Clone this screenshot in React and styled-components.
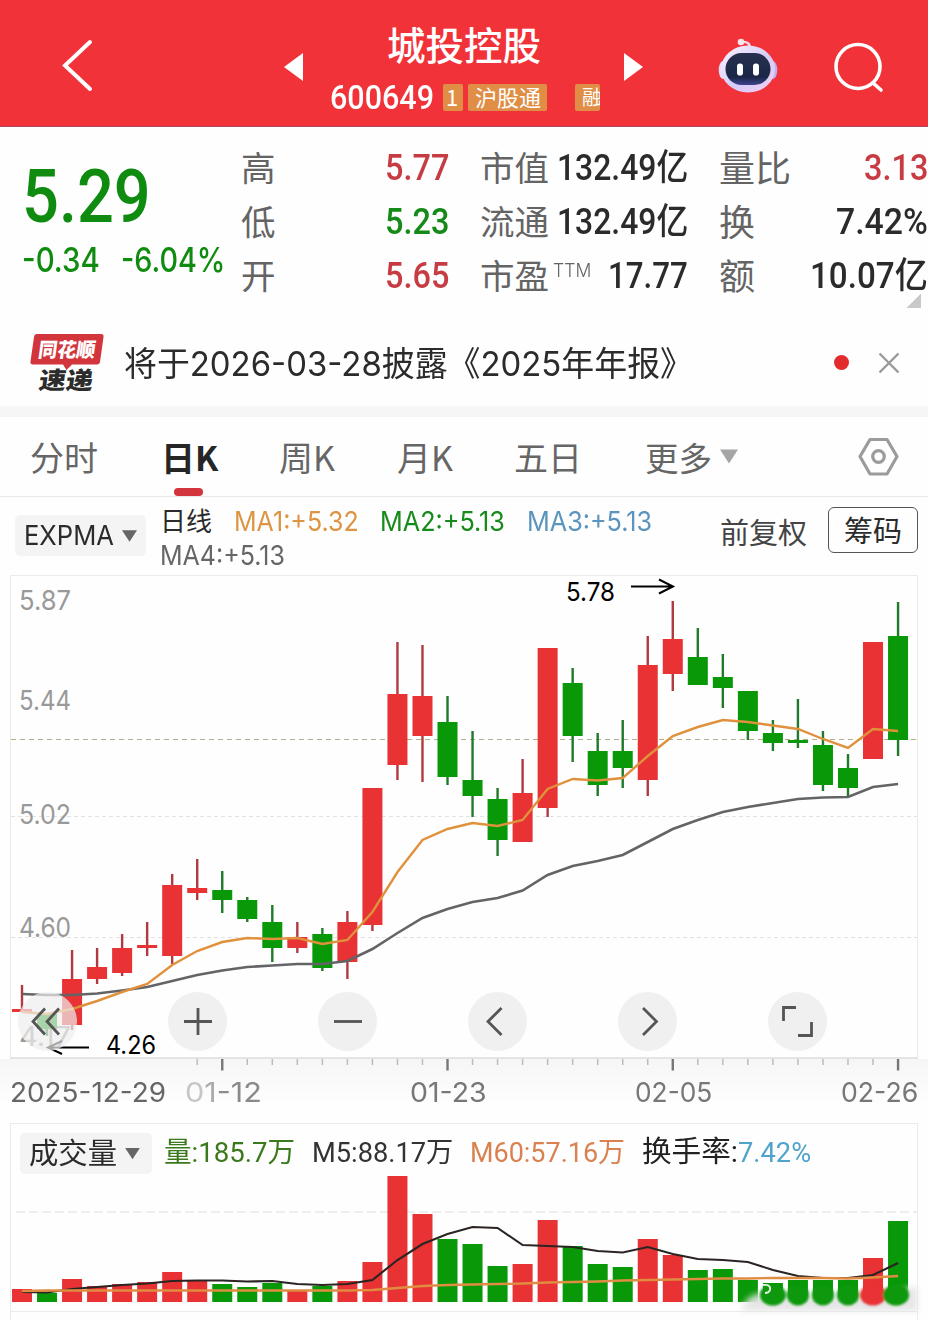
import React, { useLayoutEffect, useRef, useState } from 'react'
import styled, { createGlobalStyle, css } from 'styled-components'

const RED = '#e83234'
const GREEN = '#089808'
const cjk = "'Noto Sans CJK SC', sans-serif"

const GlobalStyle = createGlobalStyle`
    * {
        box-sizing: border-box;
    }
    body {
        margin: 0;
        background: #fefefe;
        font-family: Inter, ${cjk};
        color: #2b2b2b;
    }
    svg {
        display: block;
        flex: none;
        overflow: visible;
    }
`

const FitBox = styled.span`
    display: block;
    flex: none;
    height: 1.3em;
    line-height: 1.3em;
    white-space: nowrap;
    font-size: ${(p) => p.$size}px;
    font-weight: ${(p) => p.$weight || 400};
    color: ${(p) => p.$color || 'inherit'};
    font-family: ${(p) => (p.$narrow ? 'Roboto' : 'Inter')}, ${cjk};
    margin-left: ${(p) => p.$left || 0}px;
    & > span {
        display: inline-block;
        transform-origin: 0 50%;
    }
`

// squeezes a label into a fixed width, like the condensed numerals of trading apps
const Fit = ({ w, size, weight, color, narrow, left, children }) => {
    const ref = useRef(null)
    const [scale, setScale] = useState(1)
    useLayoutEffect(() => {
        setScale(w / ref.current.offsetWidth)
    }, [w])
    return (
        <FitBox $size={size} $weight={weight} $color={color} $narrow={narrow} $left={left} style={{ width: w }}>
            <span ref={ref} style={{ transform: `scaleX(${scale})` }}>
                {children}
            </span>
        </FitBox>
    )
}

const Page = styled.main`
    width: 928px;
    height: 1320px;
    overflow: hidden;
    display: flex;
    flex-direction: column;
`

const Header = styled.header`
    height: 127px;
    flex: none;
    display: flex;
    align-items: flex-start;
    background: #f23239;
    border-bottom: 1px solid #a9485f;
    color: #fff;
`

const HeaderIcon = styled.div`
    flex: none;
    margin: ${(p) => p.$top}px 0 0 ${(p) => p.$left}px;
`

const TitleBlock = styled.div`
    width: 270px;
    margin-left: 27px;
    padding-top: 18px;
`

const StockName = styled.h1`
    margin: 0 0 0 57px;
    font: 500 38.5px/50px ${cjk};
`

const CodeRow = styled.div`
    display: flex;
    align-items: center;
    height: 58px;
`

const Tag = styled.span`
    width: ${(p) => p.$width}px;
    height: 27px;
    margin-left: ${(p) => p.$left}px;
    padding-left: ${(p) => p.$pad}px;
    overflow: ${(p) => (p.$clip ? 'hidden' : 'visible')};
    white-space: nowrap;
    border-radius: 2px;
    background: #e08e46;
    font: 400 ${(p) => (p.$clip ? 20 : 22)}px/25px ${cjk};
`

const Quote = styled.section`
    height: 192px;
    flex: none;
    display: flex;
    padding: 14px 0 0 22px;
`

const PriceBlock = styled.div`
    width: 219px;
    padding-top: 8px;
    color: #0f8c10;
`

const ChangeRow = styled.div`
    display: flex;
    margin-top: -7px;
`

const StatColumn = styled.div`
    width: ${(p) => p.$width}px;
    margin-right: ${(p) => p.$gap || 0}px;
`

const StatRow = styled.div`
    height: 54px;
    display: flex;
    align-items: center;
    justify-content: space-between;
`

const StatLabel = styled.span`
    display: flex;
    padding-bottom: 5px;
    font: 400 ${(p) => p.$size || 34.5}px/48px ${cjk};
    color: #646464;
    sup {
        padding: 9px 0 0 4px;
        font: 300 19px/38px Inter, sans-serif;
    }
`

const ExpandCorner = styled.div`
    width: 15px;
    height: 14px;
    margin: -9px 0 0 187px;
    background: linear-gradient(135deg, transparent 50%, #c9c9c9 50%);
`

const Notice = styled.section`
    height: 87px;
    flex: none;
    display: flex;
    align-items: center;
    padding-left: 29px;
`

const NoticeText = styled.div`
    padding: 3px 0 0 19px;
`

const Dot = styled.i`
    width: 15px;
    height: 15px;
    margin: 0 29px 0 141px;
    border-radius: 50%;
    background: #e32b2e;
`

const Band = styled.div`
    height: 11px;
    flex: none;
    background: #f6f6f6;
`

const Tabs = styled.nav`
    height: 80px;
    flex: none;
    display: flex;
    border-bottom: 1px solid #e9e9e9;
    padding-left: 30px;
`

const Tab = styled.div`
    width: ${(p) => p.$width}px;
    display: flex;
    flex-direction: column;
    justify-content: space-between;
    font: 400 34px/79px ${cjk};
    color: #666;
    white-space: nowrap;
    ${(p) =>
        p.$active &&
        css`
            color: #262626;
            font-weight: 700;
            &::after {
                content: '';
                width: 29px;
                height: 8px;
                margin-left: 13px;
                border-radius: 4px;
                background: #d2353b;
                margin-top: -9px;
            }
        `}
`

const MoreTab = styled.div`
    display: flex;
    align-items: center;
    width: 213px;
    font: 400 33.5px/78px ${cjk};
    color: #666;
`

const Triangle = styled.i`
    width: ${(p) => p.$size}px;
    height: ${(p) => p.$size * 0.78}px;
    margin-left: ${(p) => p.$left || 8}px;
    background: ${(p) => p.$color || '#666'};
    clip-path: polygon(0 0, 100% 0, 50% 100%);
`

const SettingsSlot = styled.div`
    padding-top: 20px;
`

const IndicatorBar = styled.section`
    height: 78px;
    flex: none;
    display: flex;
    padding-left: 15px;
`

const Pill = styled.div`
    width: ${(p) => p.$width}px;
    height: 41px;
    margin-top: ${(p) => p.$top || 0}px;
    padding: 1px 0 0 9px;
    display: flex;
    align-items: center;
    border-radius: 5px;
    background: #f4f4f4;
`

const Legend = styled.div`
    width: 560px;
    margin-left: 14px;
    padding-top: 8px;
`

const LegendRow = styled.div`
    height: 34px;
    display: flex;
    align-items: center;
`

const ChipButton = styled.div`
    width: 90px;
    height: 46px;
    margin: 10px 0 0 21px;
    border: 1.5px solid #555;
    border-radius: 6px;
    text-align: center;
    font: 400 29px/42px ${cjk};
`

const AdjustLabel = styled.div`
    font: 400 29px/68px ${cjk};
    color: #444;
`

const ChartPanel = styled.section`
    position: relative;
    height: 484px;
    flex: none;
`

// floats over the bottom of the candles
const Controls = styled.div`
    position: absolute;
    left: 17.5px;
    bottom: 8px;
    display: flex;
    gap: 91.1px;
`

const RoundButton = styled.button`
    width: 59px;
    height: 59px;
    padding: 0;
    border: 0;
    border-radius: 50%;
    background: ${(p) => (p.$faded ? 'rgba(238, 238, 238, 0.7)' : '#f0f0f0')};
`

const AxisPanel = styled.section`
    height: 64px;
    flex: none;
    background: linear-gradient(#f6f6f6, #fefefe 75%);
`

const DateRow = styled.div`
    display: flex;
    padding-left: 10px;
`

const Faint = styled.span`
    color: ${(p) => p.$shade};
`

const VolumePanel = styled.section`
    height: 189px;
    flex: none;
    margin: 0 10px;
    border: 1px solid #ebebeb;
`

const VolumeLegend = styled.div`
    height: 50px;
    display: flex;
    align-items: center;
    padding: 8px 0 0 9px;
`

const NextPanel = styled.div`
    flex: 1;
    margin: 0 10px;
    border: solid #ebebeb;
    border-width: 0 1px;
`

const STEP = 25.03
const cx = (i) => 22 + i * STEP

// [high, body top, body bottom, low, up?] in page pixels
const candles = [
    [985, 1009, 1012, 1012, 1],
    [1013, 1014, 1029, 1036, 0],
    [950, 979, 1025, 1030, 1],
    [948, 967, 979, 984, 1],
    [934, 948, 973, 976, 1],
    [922, 945, 948, 956, 1],
    [874, 885, 956, 964, 1],
    [859, 888, 893, 900, 1],
    [871, 890, 900, 913, 0],
    [897, 900, 919, 922, 0],
    [905, 922, 948, 962, 0],
    [922, 937, 948, 953, 1],
    [928, 934, 968, 971, 0],
    [911, 922, 962, 979, 1],
    [788, 788, 925, 931, 1],
    [642, 694, 765, 780, 1],
    [645, 696, 736, 782, 1],
    [696, 722, 777, 785, 0],
    [731, 780, 796, 817, 0],
    [788, 799, 840, 856, 0],
    [759, 793, 842, 842, 1],
    [648, 648, 808, 817, 1],
    [668, 683, 736, 762, 0],
    [733, 751, 785, 796, 0],
    [720, 751, 768, 788, 0],
    [636, 665, 780, 796, 1],
    [601, 639, 674, 691, 1],
    [628, 657, 685, 685, 0],
    [654, 677, 688, 708, 0],
    [691, 691, 731, 740, 0],
    [720, 733, 743, 751, 0],
    [699, 740, 743, 748, 0],
    [731, 745, 785, 791, 0],
    [754, 768, 788, 797, 0],
    [642, 642, 759, 759, 1],
    [602, 636, 740, 756, 0]
]

const maFast = [
    1012, 1014, 1009, 1001, 992, 984, 965, 951, 942, 938, 939, 938, 944, 940, 912, 872, 840, 829, 823, 826, 820, 789,
    779, 780.5, 778, 756, 736, 727, 720, 722, 725.5, 729, 739, 748, 729, 731
]
const maSlow = [
    994, 995, 995, 993.5, 990.5, 987, 981, 975, 970.5, 967, 965.5, 964, 964, 961, 949, 933, 918, 909, 902, 898, 890.5,
    875, 866, 861, 855, 842, 829, 820, 812, 807, 803, 799, 797.5, 797, 787, 784
]
const volumes = [
    1289, 1293, 1279, 1286, 1284, 1282, 1272, 1280.5, 1284, 1287, 1283, 1290, 1286, 1281, 1262, 1176, 1214, 1239, 1244,
    1266, 1264, 1220, 1246, 1264, 1267, 1239, 1255, 1270, 1269, 1280, 1283, 1280, 1280, 1280, 1258, 1221
]
const volM5 = [
    1292, 1292.5, 1289, 1287, 1285, 1283.5, 1281, 1280.5, 1280.5, 1281.5, 1281, 1284, 1285, 1284, 1280, 1260, 1244,
    1234, 1227, 1228, 1245, 1246, 1247, 1251, 1252.5, 1247, 1254, 1259, 1260, 1262, 1270, 1276, 1278, 1278, 1275, 1263
]
const volM60 = [
    1291, 1290.5, 1290.5, 1290.5, 1290.5, 1290.5, 1290.5, 1290.5, 1290.5, 1290.5, 1290.5, 1290.5, 1290.5, 1290.5,
    1290, 1288, 1286, 1285, 1284.5, 1284, 1283.5, 1282.5, 1282, 1281.5, 1280.5, 1280, 1279.5, 1279, 1278.5, 1278.5,
    1278, 1278, 1278, 1278.5, 1277.5, 1276
]
const line = (ys) => ys.map((y, i) => `${cx(i).toFixed(1)},${y}`).join(' ')

const priceLabels = [
    ['5.87', 610],
    ['5.44', 710],
    ['5.02', 824],
    ['4.60', 937],
    ['4.17', 1046]
]

const CandleChart = () => (
    <svg width="928" height="484" viewBox="0 575 928 484" fontFamily="Inter, sans-serif">
        <path d="M10.5 1057.5V575.5H917.5V1057.5" fill="none" stroke="#ebebeb" />
        <path d="M10 1058H918" stroke="#e4e4e4" strokeWidth="2" />
        <path d="M11 816.5H917M11 937.5H917" stroke="#e2e2e2" strokeDasharray="4 3" />
        <path d="M11 739.5H917" stroke="#b5b08a" strokeDasharray="5 4" />
        {priceLabels.map(([label, y]) => (
            <text key={label} x="19" y={y} fontSize="27" fill="#999" textLength="52" lengthAdjust="spacingAndGlyphs">
                {label}
            </text>
        ))}
        {candles.map(([high, top, bottom, low, up], i) => (
            <g key={i} fill={up ? RED : GREEN}>
                <rect x={cx(i) - 1.2} y={high} width="2.4" height={low - high} fill={up ? '#b03a40' : '#1f7a2a'} />
                <rect x={cx(i) - 10} y={top} width="20" height={bottom - top} />
            </g>
        ))}
        <polyline points={line(maSlow)} fill="none" stroke="#646466" strokeWidth="2.6" />
        <polyline points={line(maFast)} fill="none" stroke="#e0913c" strokeWidth="2.4" />
        <g fill="none" stroke="#000" strokeWidth="2">
            <path d="M631 586.5H672M659 579.5L673 586.5L659 593.5" />
            <path d="M89 1047.5H49M62 1041L48 1047.5L62 1054" />
        </g>
        <text x="566" y="601" fontSize="26" textLength="49" lengthAdjust="spacingAndGlyphs">
            5.78
        </text>
        <text x="106" y="1054" fontSize="25" textLength="50" lengthAdjust="spacingAndGlyphs">
            4.26
        </text>
    </svg>
)

const VolumeChart = () => (
    <svg width="906" height="137" viewBox="11 1174 906 137">
        <defs>
            <filter id="haze" x="-20%" y="-50%" width="140%" height="200%">
                <feGaussianBlur stdDeviation="3" />
            </filter>
            <filter id="soft">
                <feGaussianBlur stdDeviation="1" />
            </filter>
        </defs>
        <path d="M16 1212H917" stroke="#e9e9e9" strokeWidth="1.5" strokeDasharray="9 4" />
        {volumes.map((y, i) => (
            <rect key={i} x={cx(i) - 10} y={y} width="20" height={1302 - y} fill={candles[i][4] ? RED : GREEN} />
        ))}
        <path
            d="M742 1310C748 1290 762 1294 772 1294H880C900 1294 902 1286 917 1288V1311H742Z"
            fill="#e4e4e4"
            opacity="0.92"
            filter="url(#haze)"
        />
        <g filter="url(#soft)">
            {[30, 31, 32, 33, 34, 35].map((i) => (
                <ellipse
                    key={i}
                    cx={cx(i) - (i === 35 ? 2 : 0)}
                    cy="1295"
                    rx={i === 30 || i > 33 ? 13 : 11}
                    ry="10.5"
                    fill={candles[i][4] ? RED : GREEN}
                />
            ))}
        </g>
        <polyline points={line(volM5)} fill="none" stroke="#2a2422" strokeWidth="2.1" />
        <polyline points={line(volM60)} fill="none" stroke="#e08c42" strokeWidth="2.3" />
        <path d="M763 1285Q771 1284 770 1290Q769 1293 765 1293" fill="none" stroke="#e9f3e6" strokeWidth="1.8" />
    </svg>
)

const AxisTicks = () => (
    <svg width="928" height="16" viewBox="0 1059 928 16">
        {candles.map((_, i) => {
            if (i < 7) return null
            const major = (i - 8) % 9 === 0
            return (
                <path
                    key={i}
                    d={`M${cx(i)} 1059V${major ? 1070.5 : 1065}`}
                    stroke={major ? '#777' : '#bbb'}
                    strokeWidth={major ? 2.4 : 1.5}
                />
            )
        })}
    </svg>
)

const Robot = () => (
    <svg width="60" height="57" viewBox="0 0 60 57">
        <defs>
            <linearGradient id="shell" x1="0" y1="0" x2="1" y2="1">
                <stop offset="0" stopColor="#fdf4ff" />
                <stop offset="0.55" stopColor="#d5ccfa" />
                <stop offset="1" stopColor="#f6cdf0" />
            </linearGradient>
            <linearGradient id="visor" x1="0" y1="0" x2="0" y2="1">
                <stop offset="0" stopColor="#27314f" />
                <stop offset="0.75" stopColor="#1b2545" />
                <stop offset="1" stopColor="#3d4590" />
            </linearGradient>
        </defs>
        <path d="M32 11C32 6 29 4.500 23 5" fill="none" stroke="#f6d8e8" strokeWidth="2.4" />
        <circle cx="23" cy="5" r="3.3" fill="#ffe3ea" />
        <ellipse cx="5" cy="33" rx="4.3" ry="9" fill="#e5dcfb" />
        <ellipse cx="55" cy="33" rx="4.3" ry="9" fill="#b9b2f2" />
        <ellipse cx="30" cy="32" rx="27" ry="23.500" fill="url(#shell)" />
        <rect x="7.500" y="16" width="45" height="32" rx="16" fill="url(#visor)" />
        <rect x="19" y="26.500" width="6" height="12" rx="2.800" fill="#fff" />
        <rect x="35" y="26.500" width="6" height="12" rx="2.800" fill="#fff" />
    </svg>
)

const NewsLogo = () => (
    <svg width="76" height="62" viewBox="0 0 76 62" fontFamily={cjk} fontWeight="900">
        <path d="M8 2H72Q75 2 74.500 5L71 30Q70.500 32.500 68 32.500H43L37.500 38L34 32.500H4Q1 32.500 1.500 29.500L5 5Q5.500 2 8 2Z" fill="#d2353c" />
        <g transform="skewX(-8)">
            <text x="12" y="25" fontSize="20" fill="#fff" textLength="57" lengthAdjust="spacingAndGlyphs">
                同花顺
            </text>
            <text x="17" y="57" fontSize="24" fill="#2c2c2c" textLength="54" lengthAdjust="spacingAndGlyphs">
                速递
            </text>
        </g>
    </svg>
)

const controlIcons = [
    'M27 16.500L15 29.500L27 42.500M41 16.500L29 29.500L41 42.500',
    'M16 29.500H44M30 16V43',
    'M16 29.500H44',
    'M33.500 16L20 29.500L33.500 43',
    'M25 16L38.500 29.500L25 43',
    'M15.500 29V15.500H28M30 43.500H43.500V30'
]

const stats = [
    { width: 208, gap: 31, rows: [['高', '5.77', '#c63c42', 64], ['低', '5.23', '#158a18', 64], ['开', '5.65', '#c63c42', 64]] },
    { width: 208, gap: 31, rows: [['市值', '132.49亿', '#2b2b2b', 131], ['流通', '132.49亿', '#2b2b2b', 131], ['市盈', '17.77', '#2b2b2b', 80]] },
    { width: 209, rows: [['量比', '3.13', '#c63c42', 64], ['换', '7.42%', '#2b2b2b', 92], ['额', '10.07亿', '#2b2b2b', 118]] }
]

export default function App() {
    return (
        <Page>
            <GlobalStyle />
            <Header>
                <HeaderIcon $left={61} $top={39}>
                    <svg width="33" height="53" fill="none" stroke="#fff" strokeWidth="4" strokeLinecap="round">
                        <path d="M29 3L4 26.500L29 50" />
                    </svg>
                </HeaderIcon>
                <HeaderIcon $left={190} $top={53}>
                    <svg width="19" height="29" fill="#fff">
                        <path d="M19 0V28L0 14Z" />
                    </svg>
                </HeaderIcon>
                <TitleBlock>
                    <StockName>城投控股</StockName>
                    <CodeRow>
                        <Fit w={104} size={34} weight={500} narrow>
                            600649
                        </Fit>
                        <Tag $width={20} $left={9} $pad={3}>1</Tag>
                        <Tag $width={79} $left={5} $pad={7}>沪股通</Tag>
                        <Tag $width={25} $left={28} $pad={7} $clip>融</Tag>
                    </CodeRow>
                </TitleBlock>
                <HeaderIcon $left={24} $top={53}>
                    <svg width="19" height="29" fill="#fff">
                        <path d="M0 0V28L19 14Z" />
                    </svg>
                </HeaderIcon>
                <HeaderIcon $left={75} $top={37}>
                    <Robot />
                </HeaderIcon>
                <HeaderIcon $left={56} $top={42}>
                    <svg width="50" height="51" fill="none" stroke="#fff" strokeWidth="3.6" strokeLinecap="round">
                        <circle cx="24" cy="24.500" r="22" />
                        <path d="M39 41L47 48" />
                    </svg>
                </HeaderIcon>
            </Header>

            <Quote>
                <PriceBlock>
                    <Fit w={129} size={74} weight={500} narrow>
                        5.29
                    </Fit>
                    <ChangeRow>
                        <Fit w={78} size={34} weight={500}>
                            -0.34
                        </Fit>
                        <Fit w={104} size={34} weight={500} left={21}>
                            -6.04%
                        </Fit>
                    </ChangeRow>
                </PriceBlock>
                {stats.map((column, c) => (
                    <StatColumn key={c} $width={column.width} $gap={column.gap}>
                        {column.rows.map(([label, value, color, w]) => (
                            <StatRow key={label}>
                                <StatLabel $size={c === 2 ? 36 : 34.5}>
                                    {label}
                                    {label === '市盈' && (
                                        <sup>
                                            <Fit w={38} size={19} weight={300}>
                                                TTM
                                            </Fit>
                                        </sup>
                                    )}
                                </StatLabel>
                                <Fit w={w} size={36} weight={500} color={color} narrow>
                                    {value}
                                </Fit>
                            </StatRow>
                        ))}
                        {c === 2 && <ExpandCorner />}
                    </StatColumn>
                ))}
            </Quote>

            <Notice>
                <NewsLogo />
                <NoticeText>
                    <Fit w={569} size={34}>
                        将于2026-03-28披露《2025年年报》
                    </Fit>
                </NoticeText>
                <Dot />
                <svg width="22" height="22" stroke="#999" strokeWidth="2.4">
                    <path d="M1.500 1.500L20.500 20.500M20.500 1.500L1.500 20.500" />
                </svg>
            </Notice>
            <Band />

            <Tabs>
                <Tab $width={131}>分时</Tab>
                <Tab $width={118} $active>日K</Tab>
                <Tab $width={118}>周K</Tab>
                <Tab $width={117}>月K</Tab>
                <Tab $width={131}>五日</Tab>
                <MoreTab>
                    更多
                    <Triangle $size={18} $color="#a5a5a5" />
                </MoreTab>
                <SettingsSlot>
                    <svg width="41" height="40" fill="none" stroke="#9b9b9b" strokeWidth="3.2" strokeLinejoin="round">
                        <path d="M12 2.500H29L39 19.500L29 37H12L2 19.500Z" />
                        <circle cx="20.500" cy="19.500" r="5.800" />
                    </svg>
                </SettingsSlot>
            </Tabs>

            <IndicatorBar>
                <Pill $width={131} $top={18}>
                    <Fit w={90} size={27}>
                        EXPMA
                    </Fit>
                    <Triangle $size={15} />
                </Pill>
                <Legend>
                    <LegendRow>
                        <Fit w={52} size={26}>日线</Fit>
                        <Fit w={125} size={27} left={22} color="#dd9443">MA1:+5.32</Fit>
                        <Fit w={125} size={27} left={21} color="#168a1a">MA2:+5.13</Fit>
                        <Fit w={125} size={27} left={22} color="#5b94bd">MA3:+5.13</Fit>
                    </LegendRow>
                    <LegendRow>
                        <Fit w={125} size={27} color="#666">MA4:+5.13</Fit>
                    </LegendRow>
                </Legend>
                <AdjustLabel>前复权</AdjustLabel>
                <ChipButton>筹码</ChipButton>
            </IndicatorBar>

            <ChartPanel>
                <CandleChart />
                <Controls>
                    {controlIcons.map((d, i) => (
                        <RoundButton key={d} $faded={i === 0}>
                            <svg width="59" height="59" fill="none" stroke="#555" strokeWidth="2.8">
                                <path d={d} />
                            </svg>
                        </RoundButton>
                    ))}
                </Controls>
            </ChartPanel>

            <AxisPanel>
                <AxisTicks />
                <DateRow>
                    <Fit w={156} size={27} color="#666">2025-12-29</Fit>
                    <Fit w={77} size={27} left={19} color="#8a8a8a">
                        <Faint $shade="#c6c6c6">0</Faint>
                        <Faint $shade="#aaa">1</Faint>-12
                    </Fit>
                    <Fit w={77} size={27} left={148} color="#777">01-23</Fit>
                    <Fit w={77} size={27} left={148} color="#777">02-05</Fit>
                    <Fit w={77} size={27} left={129} color="#777">02-26</Fit>
                </DateRow>
            </AxisPanel>

            <VolumePanel>
                <VolumeLegend>
                    <Pill $width={132}>
                        <Fit w={88} size={29}>成交量</Fit>
                        <Triangle $size={15} />
                    </Pill>
                    <Fit w={131} size={28} left={12} color="#3b7a1c" narrow>量:185.7万</Fit>
                    <Fit w={141} size={28} left={17} color="#333" narrow>M5:88.17万</Fit>
                    <Fit w={155} size={28} left={17} color="#d9814f" narrow>M60:57.16万</Fit>
                    <Fit w={96} size={29} left={17} color="#222" narrow>换手率:</Fit>
                    <Fit w={73} size={28} color="#4fa3cc" narrow>7.42%</Fit>
                </VolumeLegend>
                <VolumeChart />
            </VolumePanel>
            <NextPanel />
        </Page>
    )
}
